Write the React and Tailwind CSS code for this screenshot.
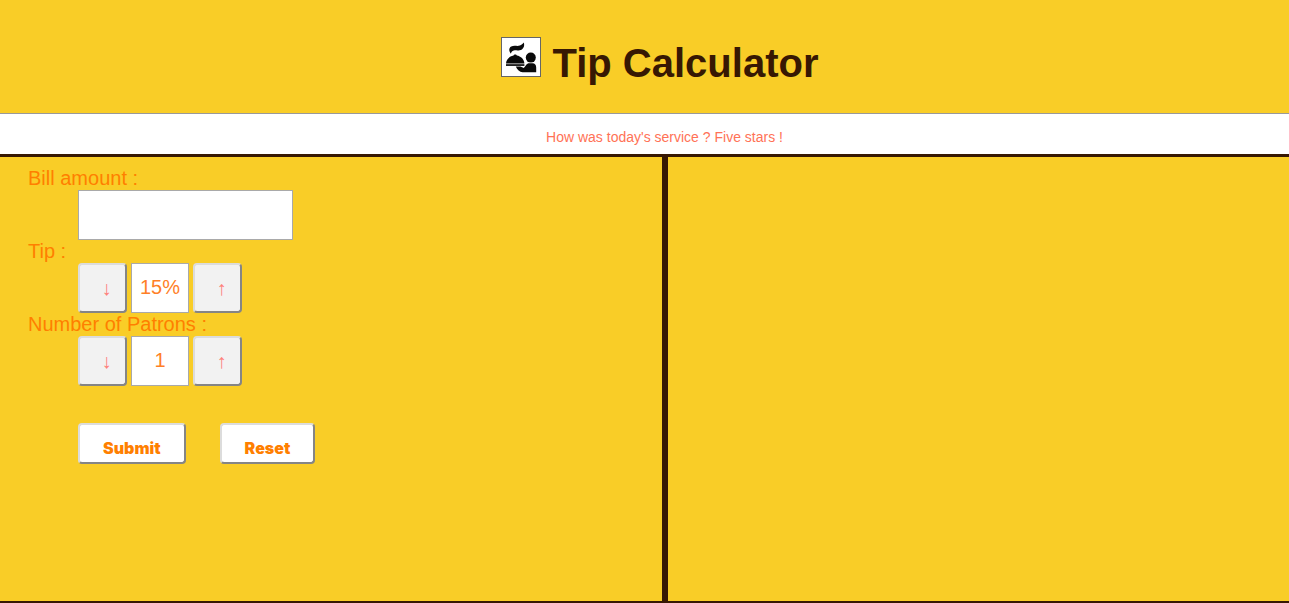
import { useState } from 'react';

function WaiterIcon() {
  return (
    <svg viewBox="0 0 40 40" className="h-10 w-10 shrink-0" role="img" aria-label="Waiter serving a dish">
      <rect x="0.5" y="0.5" width="39" height="39" fill="#fff" stroke="#666" />
      <path d="M10 16.8C7.8 14.6 7.6 11 10.2 9.6C13.2 8 16 9.6 18.8 8.6C20.6 7.9 21.6 6.8 22.8 5.4C24 9.2 22.2 12.6 18.6 13.3C15.6 13.9 13.4 12.7 11.6 14C10.6 14.7 10 15.6 10 16.8Z" fill="#0a0a0a" />
      <path d="M5 26.6C5.2 22.2 8.6 19.2 12.6 18.6C12.8 17.2 15.6 17.2 15.8 18.6C19.8 19.2 23.2 22.2 23.4 26.6Z" fill="#0a0a0a" />
      <rect x="5" y="27.2" width="18.4" height="1.7" fill="#0a0a0a" />
      <circle cx="29.8" cy="20.6" r="5" fill="#0a0a0a" />
      <path d="M14.8 29.4H19.4L22.8 31C24 30.4 24.8 27 27.4 26.3H31.4C34 26.4 35.2 28 35.2 30.4V35.2H21.6C18.6 35 16.2 32.6 14.8 29.4Z" fill="#0a0a0a" />
    </svg>
  );
}

const bevel =
  'rounded border-2 border-t-[#dcdcdc] border-l-[#dcdcdc] border-r-[#858585] border-b-[#858585]';

function Stepper({ id, label, text, onDown, onUp }) {
  const button = `${bevel} h-[50px] w-[49px] bg-[#f2f2f2] pl-2 text-xl leading-6 text-[#ff7f7a]`;
  return (
    <div>
      <label htmlFor={id} className="block h-[23px] leading-[23px]">{label}</label>
      <div className="ml-[50px] flex gap-1">
        <button type="button" aria-label={`Decrease ${label}`} onClick={onDown} className={button}>↓</button>
        <input
          id={id}
          readOnly
          value={text}
          className="h-[50px] w-[58px] border border-[#a9a9a9] bg-white pb-0.5 text-center text-xl text-[#ff7f27] outline-none"
        />
        <button type="button" aria-label={`Increase ${label}`} onClick={onUp} className={button}>↑</button>
      </div>
    </div>
  );
}

export default function App() {
  const [bill, setBill] = useState('');
  const [tip, setTip] = useState(15);
  const [patrons, setPatrons] = useState(1);
  const [total, setTotal] = useState(null);

  const submit = (event) => {
    event.preventDefault();
    setTotal(((Number(bill) || 0) * (1 + tip / 100)) / patrons);
  };
  const reset = () => {
    setBill('');
    setTip(15);
    setPatrons(1);
    setTotal(null);
  };
  const action = `${bevel} h-[41px] bg-white px-[23px] pt-2 font-[Inter,sans-serif] text-base font-black text-[#ff7f00]`;

  return (
    <div className="flex min-h-screen flex-col bg-[#f9cd27] font-['Liberation_Sans',Arial,sans-serif]">
      <header className="flex justify-center gap-3 border-b border-[#999] pt-[37px] pb-[26px] pl-[30px]">
        <WaiterIcon />
        <h1 className="pt-0.5 text-[40px] leading-12 font-bold text-[#371803]">Tip Calculator</h1>
      </header>
      <p className="border-b-[3px] border-[#371803] bg-white pt-[13px] pb-[7px] pl-10 text-center text-sm text-[#ff7256]">
        How was today's service ? Five stars !
      </p>
      <main className="grid flex-1 grid-cols-[calc(50%+20px)_1fr] border-b-2 border-[#371803]">
        <form onSubmit={submit} className="border-r-[3px] border-[#371803] pt-[10px] pl-7 text-xl text-[#ff7f00]">
          <label htmlFor="bill" className="block h-[23px] leading-[23px]">Bill amount :</label>
          <input
            id="bill"
            value={bill}
            onChange={(event) => setBill(event.target.value)}
            className="ml-[50px] block h-[50px] w-[215px] border border-[#a9a9a9] bg-white px-2 outline-none"
          />
          <Stepper
            id="tip"
            label="Tip :"
            text={`${tip}%`}
            onDown={() => setTip(Math.max(0, tip - 1))}
            onUp={() => setTip(tip + 1)}
          />
          <Stepper
            id="patrons"
            label="Number of Patrons :"
            text={patrons}
            onDown={() => setPatrons(Math.max(1, patrons - 1))}
            onUp={() => setPatrons(patrons + 1)}
          />
          <div className="mt-[37px] ml-[50px] flex gap-[34px]">
            <button type="submit" className={action}>Submit</button>
            <button type="button" onClick={reset} className={action}>Reset</button>
          </div>
        </form>
        <section aria-live="polite" className="border-l-[3px] border-[#371803] p-7 text-xl text-[#ff7f00]">
          {total !== null && <p>Each patron pays : {total.toFixed(2)}</p>}
        </section>
      </main>
    </div>
  );
}
